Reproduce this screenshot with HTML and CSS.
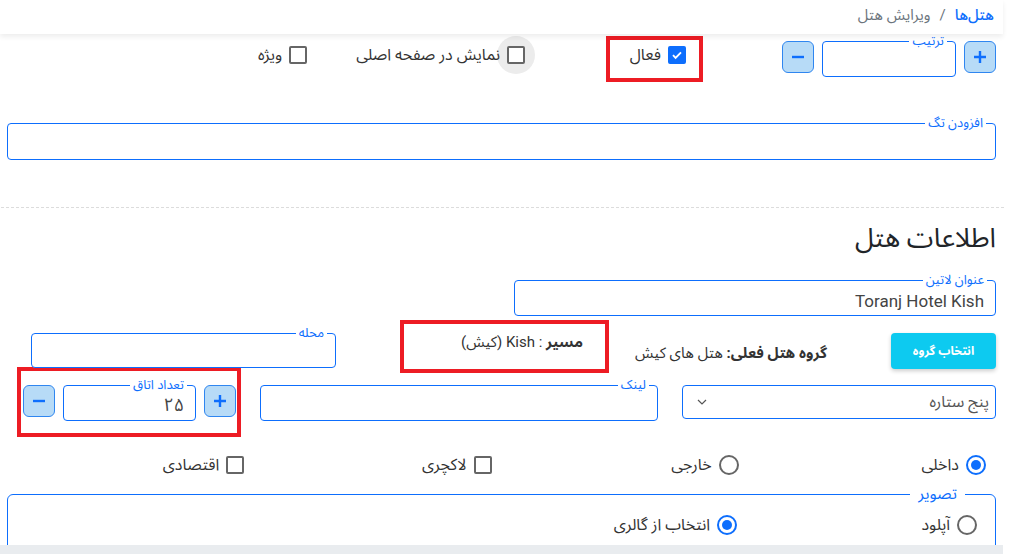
FILE: index.html
```html
<!DOCTYPE html>
<html lang="fa" dir="rtl">
<head>
<meta charset="utf-8">
<title>ویرایش هتل</title>
<link rel="stylesheet" href="styles.css">
</head>
<body>
<div class="page">
  <header class="topbar">
    <nav class="crumbs">
      <span class="crumb-link">هتل‌ها</span>
      <span class="crumb-sep">/</span>
      <span class="crumb-cur">ویرایش هتل</span>
    </nav>
  </header>

  <main class="content">
    <div class="row row-top">
      <div class="stepper">
        <button class="step-btn" type="button"><svg width="14" height="14" viewBox="0 0 14 14"><path d="M7 1v12M1 7h12" stroke="#0d6efd" stroke-width="2.4" fill="none"/></svg></button>
        <div class="field field-order"><span class="field-label">ترتیب</span><input class="field-input" type="text"></div>
        <button class="step-btn" type="button"><svg width="14" height="14" viewBox="0 0 14 14"><path d="M1 7h12" stroke="#0d6efd" stroke-width="2.4" fill="none"/></svg></button>
      </div>

      <div class="mark mark-active">
        <label class="check"><span class="box box-on"><svg width="12" height="12" viewBox="0 0 12 12"><path d="M2 6.2l2.6 2.6L10 3.4" stroke="#fff" stroke-width="1.9" fill="none"/></svg></span><span>فعال</span></label>
      </div>

      <label class="check check-home"><span class="halo"><span class="box"></span></span><span>نمایش در صفحه اصلی</span></label>
      <label class="check check-special"><span class="box"></span><span>ویژه</span></label>
    </div>

    <div class="field field-tags"><span class="field-label">افزودن تگ</span><input class="field-input" type="text"></div>

    <hr class="divider">

    <h2 class="section-title">اطلاعات هتل</h2>

    <div class="field field-latin"><span class="field-label">عنوان لاتین</span><input class="field-input field-value-lat" type="text" value="Toranj Hotel Kish"></div>

    <div class="row row-group">
      <button class="btn-group" type="button">انتخاب گروه</button>
      <div class="group-text"><b>گروه هتل فعلی:</b> هتل های کیش</div>
      <div class="mark mark-path"><span><b>مسیر</b> : Kish (کیش)</span></div>
      <div class="field field-area"><span class="field-label">محله</span><input class="field-input" type="text"></div>
    </div>

    <div class="row row-third">
      <div class="select">
        <span>پنج ستاره</span>
        <svg width="10" height="6" viewBox="0 0 10 6"><path d="M1 1l4 4 4-4" stroke="#555" stroke-width="1.2" fill="none"/></svg>
      </div>
      <div class="field field-link"><span class="field-label">لینک</span><input class="field-input" type="text"></div>
      <div class="mark mark-rooms">
        <div class="stepper">
          <button class="step-btn" type="button"><svg width="14" height="14" viewBox="0 0 14 14"><path d="M7 1v12M1 7h12" stroke="#0d6efd" stroke-width="2.4" fill="none"/></svg></button>
          <div class="field field-order"><span class="field-label">تعداد اتاق</span><input class="field-input field-value" type="text" value="۲۵"></div>
          <button class="step-btn" type="button"><svg width="14" height="14" viewBox="0 0 14 14"><path d="M1 7h12" stroke="#0d6efd" stroke-width="2.4" fill="none"/></svg></button>
        </div>
      </div>
    </div>

    <div class="options">
      <label class="check"><span class="radio radio-on"><span class="dot"></span></span><span>داخلی</span></label>
      <label class="check"><span class="radio"></span><span>خارجی</span></label>
      <label class="check"><span class="box"></span><span>لاکچری</span></label>
      <label class="check"><span class="box"></span><span>اقتصادی</span></label>
    </div>

    <fieldset class="pics">
      <legend>تصویر</legend>
      <div class="pics-row">
        <label class="check pic-opt"><span class="radio"></span><span>آپلود</span></label>
        <label class="check pic-opt"><span class="radio radio-on"><span class="dot"></span></span><span>انتخاب از گالری</span></label>
      </div>
    </fieldset>
  </main>
  <div class="bottom-bar"></div>
</div>
</body>
</html>
```

FILE: styles.css
```css
* { box-sizing: border-box; }
html, body { margin: 0; background: #fff; }
body {
  direction: rtl;
  font-family: Roboto, "Noto Sans Arabic", Vazirmatn, "DejaVu Sans", sans-serif;
  font-size: 15px;
  color: #333;
}
.page { width: 1004px; margin-left: 0; margin-right: auto; }

.topbar {
  position: relative;
  z-index: 2;
  width: 1003px;
  margin-left: 0;
  margin-right: auto;
  height: 34px;
  padding: 0 9px 4px 0;
  display: flex;
  align-items: center;
  background: #fff;
  box-shadow: 0 3px 5px rgba(0,0,0,0.07);
}
.crumbs { display: flex; align-items: center; gap: 9px; font-size: 15px; }
.crumb-link { color: #0d6efd; font-weight: 500; }
.crumb-sep { color: #6c757d; }
.crumb-cur { color: #6c757d; }

.content { padding: 0 8px 0 7px; }

.row { display: flex; }

.row-top { margin-top: 2px; height: 46px; align-items: center; }

.stepper { display: flex; gap: 8px; align-items: flex-start; width: 214px; }
.step-btn {
  width: 32px; height: 32px; flex: none;
  padding: 0;
  border: 1px solid #2f86f0;
  border-radius: 6px;
  background: #b7dbf7;
  display: flex; align-items: center; justify-content: center;
}

.field {
  position: relative;
  border: 1px solid #0d6efd;
  border-radius: 4px;
  height: 36px;
  background: #fff;
}
.field-label {
  position: absolute;
  top: -9px; right: 8px;
  padding: 0 3px;
  background: #fff;
  color: #0d6efd;
  font-size: 13px;
  line-height: 16px;
}
.field-input {
  width: 100%; height: 100%;
  border: 0; outline: 0; background: transparent;
  padding: 4px 11px 0;
  font: inherit;
  font-size: 17px;
  color: #444;
  text-align: right;
}
.field-order { width: 134px; }
.field-value-lat { padding-top: 6px; direction: ltr; text-align: right; padding-right: 11px; }

.mark { border: 4px solid #ed1c24; }
.mark-active {
  width: 97px; height: 46px;
  margin-right: 79px;
  padding: 5px 13px 0 0;
  display: flex; align-items: flex-start;
}

.check { display: flex; align-items: center; gap: 7px; white-space: nowrap; font-size: 16px; line-height: 20px; color: #333; }
.box {
  width: 18px; height: 18px; flex: none;
  border: 2px solid #666;
  border-radius: 2px;
  background: #fff;
  display: flex; align-items: center; justify-content: center;
}
.box-on { background: #0d6efd; border-color: #0d6efd; }
.halo {
  width: 38px; height: 38px; flex: none;
  margin: -10px;
  border-radius: 50%;
  background: #ececec;
  display: flex; align-items: center; justify-content: center;
}
.check-home { margin-right: 81px; align-self: flex-start; margin-top: 9px; }
.check-special { margin-right: 49px; align-self: flex-start; margin-top: 9px; }

.field-tags { margin-top: 41px; height: 37px; }
.field-tags .field-label { right: 9px; }

.divider {
  margin: 47px -8px 0 -7px;
  width: 1003px;
  border: 0;
  border-top: 1px dashed #dcdcdc;
  height: 0;
}

.section-title {
  margin: 10px 0 0;
  font-size: 27px;
  line-height: 40px;
  font-weight: 400;
  color: #212529;
}

.field-latin { width: 482px; margin-top: 22px; }

.row-group { margin-top: 4px; height: 53px; align-items: flex-start; }
.btn-group {
  margin-top: 13px;
  width: 105px; height: 36px; flex: none;
  border: 0; border-radius: 4px;
  background: #0dcaf0;
  color: #fff;
  font: inherit; font-size: 12px; font-weight: 700;
  box-shadow: 0 2px 4px rgba(0,0,0,0.2);
}
.group-text {
  width: 222px; flex: none;
  margin-right: 60px;
  margin-top: 17px;
  padding-right: 4px;
  white-space: nowrap;
}
.mark-path {
  width: 209px; height: 53px; flex: none;
  padding: 0 22px 0 0;
  display: flex; align-items: center;
  padding-bottom: 10px;
}
.field-area { width: 305px; height: 35px; margin-top: 13px; margin-right: 64px; }

.row-third { margin-top: 12px; align-items: flex-start; }
.select {
  width: 314px; height: 34px; flex: none;
  border: 1px solid #0d6efd;
  border-radius: 4px;
  padding: 0 6px 0 14px;
  display: flex; align-items: center; justify-content: space-between;
  color: #555;
  font-size: 16px;
}
.field-link { width: 398px; margin-right: 24px; }
.mark-rooms {
  width: 224px; height: 70px; flex: none;
  margin: -18px 19px 0 0;
  padding: 14px 1px 0 2px;
}
.mark-rooms .stepper { width: auto; }
.field-value { font-size: 18px; }

.options {
  margin-top: 14px;
  height: 28px;
  display: grid;
  grid-template-columns: repeat(4, 1fr);
  align-items: center;
}
.options .check { padding-right: 10px; }

.radio {
  width: 20px; height: 20px; flex: none;
  border: 2px solid #666;
  border-radius: 50%;
  background: #fff;
  display: flex; align-items: center; justify-content: center;
}
.radio-on { border-color: #0d6efd; }
.dot { width: 10px; height: 10px; border-radius: 50%; background: #0d6efd; }

.pics {
  margin: 6px 0 0;
  border: 1px solid #0d6efd;
  border-radius: 6px;
  padding: 10px 18px 30px;
  min-width: 0;
}
.pics legend {
  padding: 0 8px;
  margin-right: 12px;
  color: #0d6efd;
  font-size: 16px;
  line-height: 18px;
}
.pics-row { display: flex; height: 24px; align-items: center; }
.pic-opt { width: 240px; }

.bottom-bar {
  position: fixed;
  left: 0; bottom: 0;
  width: 1003px; height: 9px;
  background: #e9ecef;
}
```
